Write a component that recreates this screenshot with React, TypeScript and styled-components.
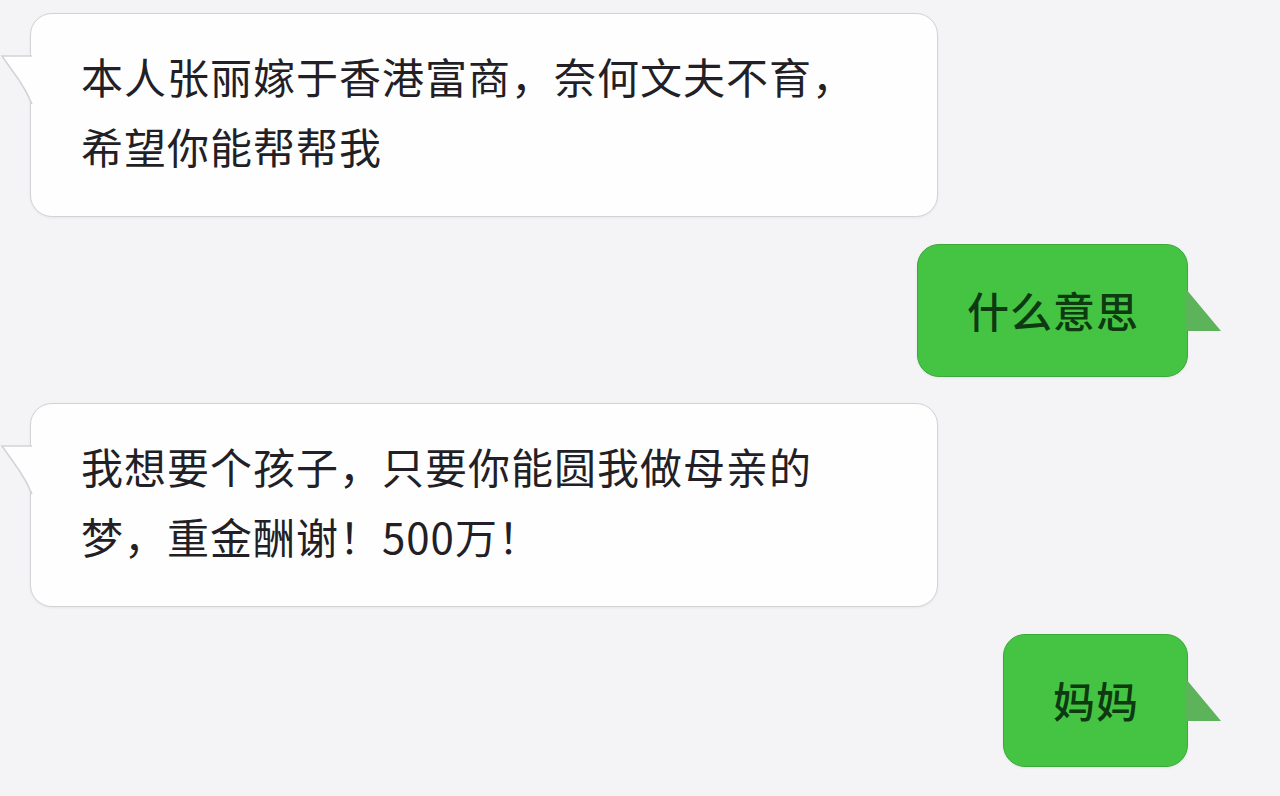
import styled, { createGlobalStyle } from "styled-components";

const GlobalStyle = createGlobalStyle`
  html, body {
    margin: 0;
    padding: 0;
    background: #f4f4f6;
  }
  body {
    font-family: "Noto Sans CJK SC", "Noto Sans", sans-serif;
  }
`;

const Chat = styled.main`
  width: 1280px;
  height: 796px;
  box-sizing: border-box;
  padding: 13px 92px 0 30px;
  display: flex;
  flex-direction: column;
  gap: 26.5px;
  background: #f4f4f6;
  overflow: hidden;
`;

const Row = styled.div<{ $mine?: boolean }>`
  display: flex;
  justify-content: ${(p) => (p.$mine ? "flex-end" : "flex-start")};
`;

const Bubble = styled.div<{ $mine?: boolean }>`
  position: relative;
  box-sizing: border-box;
  width: ${(p) => (p.$mine ? "auto" : "908px")};
  padding: ${(p) => (p.$mine ? "30px 48px 31px 49px" : "27px 50px 35px")};
  border-radius: 22px;
  background: ${(p) => (p.$mine ? "#45c443" : "#fefefe")};
  border: 1px solid ${(p) => (p.$mine ? "#3aa83a" : "#d3d3d7")};
  box-shadow: 0 1px 3px rgba(0, 0, 0, 0.06);
  font-size: 42px;
  font-weight: ${(p) => (p.$mine ? 500 : 400)};
  line-height: 70px;
  letter-spacing: 1px;
  color: ${(p) => (p.$mine ? "#0d3a10" : "#231f26")};
  white-space: nowrap;
`;

const Tail = styled.svg<{ $mine?: boolean }>`
  position: absolute;
  top: ${(p) => (p.$mine ? "44px" : "40px")};
  ${(p) => (p.$mine ? "right: -35px;" : "left: -30px;")}
  overflow: visible;
`;

function LeftTail() {
  return (
    <Tail width="31" height="52" viewBox="0 0 31 52">
      <path d="M31 2 L30 2 L1 2 Q8 12 18 26 Q26 38 31 50 Z" fill="#fefefe" />
      <path
        d="M31 2 L1 2 Q8 12 18 26 Q26 38 31 50"
        fill="none"
        stroke="#d3d3d7"
        strokeWidth="1.5"
      />
    </Tail>
  );
}

function RightTail() {
  return (
    <Tail $mine width="36" height="44" viewBox="0 0 36 44">
      <path d="M0 0 L35 42 L0 42 Z" fill="#5cb35a" />
    </Tail>
  );
}

const messages = [
  { mine: false, lines: ["本人张丽嫁于香港富商，奈何文夫不育，", "希望你能帮帮我"] },
  { mine: true, lines: ["什么意思"] },
  { mine: false, lines: ["我想要个孩子，只要你能圆我做母亲的", "梦，重金酬谢！500万！"] },
  { mine: true, lines: ["妈妈"] },
];

export default function App() {
  return (
    <>
      <GlobalStyle />
      <Chat>
        {messages.map((m, idx) => (
          <Row key={idx} $mine={m.mine}>
            <Bubble $mine={m.mine}>
              {m.mine ? <RightTail /> : <LeftTail />}
              {m.lines.map((line, i) => (
                <div key={i}>{line}</div>
              ))}
            </Bubble>
          </Row>
        ))}
      </Chat>
    </>
  );
}
